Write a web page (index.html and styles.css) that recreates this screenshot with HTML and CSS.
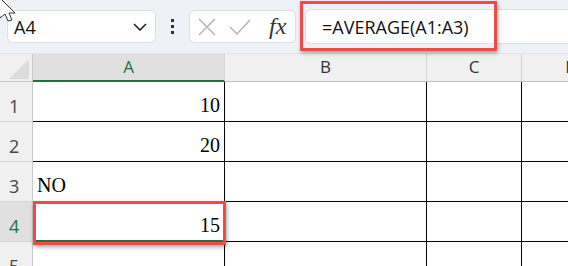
FILE: index.html
```html
<!DOCTYPE html>
<html lang="en">
<head>
    <meta charset="UTF-8">
    <title>AVERAGE</title>
    <link rel="stylesheet" href="styles.css">
</head>
<body>
    <div class="toolbar">
        <div class="namebox">
            <span>A4</span>
            <svg class="chevron" width="14" height="8" viewBox="0 0 14 8"><path d="M1 1 L7 7 L13 1" fill="none" stroke="#222" stroke-width="1.6"/></svg>
        </div>
        <div class="dots"><i></i><i></i><i></i></div>
        <div class="fxbox">
            <svg width="20" height="20" viewBox="0 0 20 20"><path d="M2 2 L18 18 M18 2 L2 18" stroke="#b4b4b4" stroke-width="1.5"/></svg>
            <svg width="22" height="20" viewBox="0 0 22 20"><path d="M1 10 L8 17 L21 3" fill="none" stroke="#b4b4b4" stroke-width="1.5"/></svg>
            <span class="fx">fx</span>
        </div>
        <div class="formula">
            <span>=AVERAGE(A1:A3)</span>
            <div class="highlight"></div>
        </div>
    </div>

    <div class="sheet">
        <div class="corner">
            <svg width="33" height="28" viewBox="0 0 33 28"><polygon points="29,5 29,25 9,25" fill="#dcdcdc"/></svg>
        </div>
        <div class="colhead active">A</div>
        <div class="colhead">B</div>
        <div class="colhead">C</div>
        <div class="colhead">D</div>

        <div class="rowhead">1</div>
        <div class="cell num">10</div>
        <div class="cell"></div>
        <div class="cell"></div>
        <div class="cell"></div>

        <div class="rowhead">2</div>
        <div class="cell num">20</div>
        <div class="cell"></div>
        <div class="cell"></div>
        <div class="cell"></div>

        <div class="rowhead">3</div>
        <div class="cell">NO</div>
        <div class="cell"></div>
        <div class="cell"></div>
        <div class="cell"></div>

        <div class="rowhead active">4</div>
        <div class="cell num selected">15<div class="redbox"></div></div>
        <div class="cell"></div>
        <div class="cell"></div>
        <div class="cell"></div>

        <div class="rowhead">5</div>
        <div class="cell"></div>
        <div class="cell"></div>
        <div class="cell"></div>
        <div class="cell"></div>
    </div>

    <svg class="cursor" width="20" height="22" viewBox="0 0 20 22"><path d="M-4 -6 L15 13 L9 13 L12 20 L8 21 L5 14 L0 18 Z" fill="#fff" stroke="#333" stroke-width="1"/></svg>
</body>
</html>
```

FILE: styles.css
```css
body {
    margin: 0;
    padding: 0;
    width: 568px;
    height: 266px;
    overflow: hidden;
    background-color: white;
    font-family: "Open Sans", "Noto Sans", sans-serif;
    position: relative;
}

.toolbar {
    height: 53px;
    background-color: #eef1f5;
    border-bottom: 1px solid #e2e4e8;
    display: flex;
    align-items: center;
    padding-left: 7px;
}

.namebox {
    width: 149px;
    height: 33px;
    box-sizing: border-box;
    background-color: white;
    border: 1px solid #dcdfe4;
    border-radius: 6px;
    display: flex;
    align-items: center;
    justify-content: space-between;
    padding: 0 8px 0 6px;
    font-size: 18px;
    color: #111;
}

.dots {
    display: flex;
    flex-direction: column;
    gap: 3px;
    margin-left: 15px;
    margin-right: 15px;
}

.dots i {
    width: 3px;
    height: 3px;
    background-color: #333;
}

.fxbox {
    width: 107px;
    height: 33px;
    box-sizing: border-box;
    background-color: white;
    border: 1px solid #dcdfe4;
    border-radius: 6px;
    display: flex;
    align-items: center;
    padding-left: 7px;
    gap: 12px;
}

.fx {
    font-family: "Liberation Serif", serif;
    font-style: italic;
    font-size: 24px;
    color: #333;
    margin-left: 6px;
}

.formula {
    position: relative;
    flex: 1;
    height: 33px;
    margin-left: 9px;
    background-color: white;
    border: 1px solid #dcdfe4;
    border-right: none;
    border-radius: 6px 0 0 6px;
    display: flex;
    align-items: center;
    padding-left: 16px;
    font-size: 18px;
    color: #111;
}

.highlight {
    position: absolute;
    left: -6px;
    top: -9px;
    width: 191px;
    height: 44px;
    border: 3px solid #f04a4a;
    box-shadow: 1px 2px 4px rgba(0,0,0,0.35);
}

.sheet {
    display: grid;
    grid-template-columns: 33px 192px 202px 95px 100px;
    grid-template-rows: 28px repeat(5, 40px);
}

.corner {
    background-color: #f0f0f0;
    border-right: 1px solid #c8c8c8;
    border-bottom: 1px solid #c8c8c8;
    box-sizing: border-box;
}

.colhead {
    background-color: #f0f0f0;
    border-right: 1px solid #d4d4d4;
    border-bottom: 1px solid #bdbdbd;
    box-sizing: border-box;
    text-align: center;
    font-size: 17px;
    line-height: 26px;
    color: #333;
}

.colhead.active {
    background-color: #e0e0e0;
    color: #1e7145;
    border-bottom: 2px solid #1e7145;
}

.rowhead {
    background-color: #f0f0f0;
    border-right: 1px solid #c8c8c8;
    border-bottom: 1px solid #d4d4d4;
    box-sizing: border-box;
    font-size: 18px;
    color: #444;
    padding: 12px 0 0 9px;
}

.rowhead.active {
    background-color: #e0e0e0;
    color: #1e7145;
}

.cell {
    border-right: 1px solid #000;
    border-bottom: 1px solid #000;
    box-sizing: border-box;
    font-family: "Liberation Serif", serif;
    font-size: 20px;
    color: #000;
    padding: 12px 4px 0 4px;
}

.cell.num {
    text-align: right;
}

.cell.selected {
    position: relative;
    border-bottom: 2px solid #1e7145;
}

.redbox {
    position: absolute;
    left: 0;
    top: -1px;
    width: 193px;
    height: 44px;
    border: 3px solid #f04a4a;
    box-sizing: border-box;
    box-shadow: 1px 2px 4px rgba(0,0,0,0.35);
}

.cursor {
    position: absolute;
    left: 0;
    top: 0;
}
```
